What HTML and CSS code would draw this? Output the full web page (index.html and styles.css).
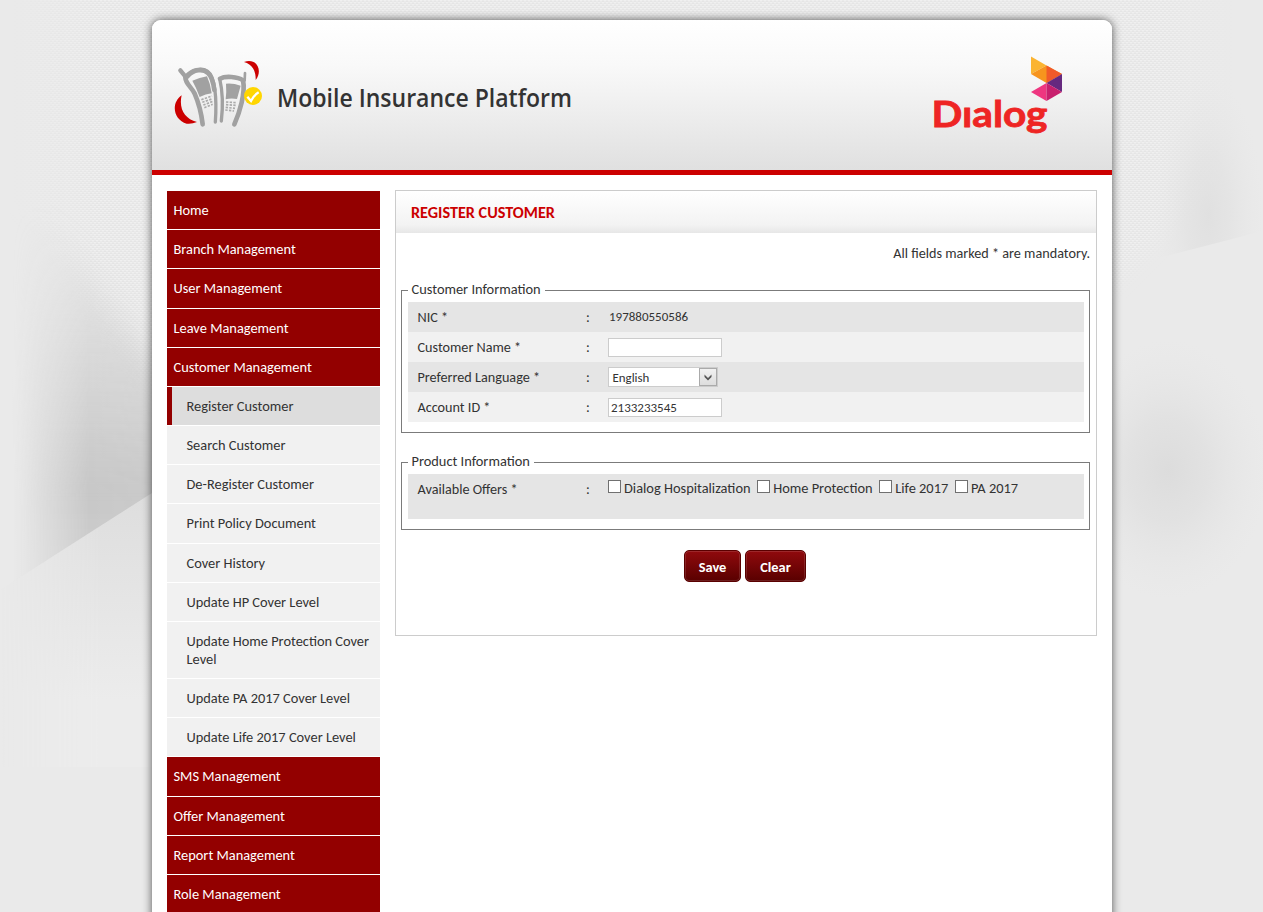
FILE: index.html
```html
<!DOCTYPE html>
<html lang="en">
<head>
<meta charset="utf-8">
<title>Mobile Insurance Platform</title>
<link rel="stylesheet" href="styles.css">
</head>
<body>
<svg class="backdrop" width="1263" height="912" viewBox="0 0 1263 912" aria-hidden="true">
  <defs>
    <pattern id="weave" width="4" height="4" patternUnits="userSpaceOnUse">
      <path d="M0 .5h2M2 2.5h2" stroke="#fff" stroke-opacity=".3"/>
      <path d="M2 1.5h2M0 3.5h2" stroke="#aaa" stroke-opacity=".08"/>
    </pattern>
    <linearGradient id="fadeX" x1="0" x2="1263" y1="0" y2="0" gradientUnits="userSpaceOnUse">
      <stop offset=".01" stop-color="#000"/><stop offset=".08" stop-color="#fff"/>
      <stop offset=".92" stop-color="#fff"/><stop offset=".975" stop-color="#000"/>
    </linearGradient>
    <filter id="edge"><feGaussianBlur stdDeviation="9"/></filter>
    <mask id="weaveMask"><path d="M0 -30H1263V100L1200 200L1112 290H600L175 415L152 400L50 240L0 200Z" fill="url(#fadeX)" filter="url(#edge)"/></mask>
    <linearGradient id="wedgeX" x1="12" x2="152" y1="0" y2="0" gradientUnits="userSpaceOnUse">
      <stop offset="0" stop-color="#000"/><stop offset=".3" stop-color="#888"/><stop offset=".55" stop-color="#fff"/><stop offset="1" stop-color="#eee"/>
    </linearGradient>
    <linearGradient id="wedgeY" x1="0" x2="0" y1="215" y2="560" gradientUnits="userSpaceOnUse">
      <stop offset="0" stop-color="#c8c8c8" stop-opacity="0"/><stop offset=".4" stop-color="#c8c8c8" stop-opacity=".5"/><stop offset=".8" stop-color="#c6c6c6"/><stop offset="1" stop-color="#cecece"/>
    </linearGradient>
    <mask id="wedgeMask"><path d="M0 0H160V488L0 590Z" fill="url(#wedgeX)"/></mask>
    <linearGradient id="lower" x1="0" x2="0" y1="500" y2="700" gradientUnits="userSpaceOnUse">
      <stop offset="0" stop-color="#dedede"/><stop offset="1" stop-color="#ececec"/>
    </linearGradient>
    <linearGradient id="leftFade" x1="0" x2="100" y1="0" y2="0" gradientUnits="userSpaceOnUse">
      <stop offset="0" stop-color="#000"/><stop offset="1" stop-color="#fff"/>
    </linearGradient>
    <mask id="lowerMask"><rect width="160" height="912" fill="url(#leftFade)"/></mask>
    <radialGradient id="spot"><stop offset="0" stop-color="#dcdcdc"/><stop offset=".4" stop-color="#dfdfdf" stop-opacity=".75"/><stop offset="1" stop-color="#e6e6e6" stop-opacity="0"/></radialGradient>
    <filter id="soft" x="-50%" y="-20%" width="200%" height="140%"><feGaussianBlur stdDeviation="13"/></filter>
    <clipPath id="rightEdge"><path d="M1112 0H1263V231L1112 270Z"/></clipPath>
  </defs>
  <rect width="1263" height="912" fill="#eaeaea"/>
  <rect width="1263" height="500" fill="url(#weave)" mask="url(#weaveMask)"/>
  <path d="M0 590L160 488V767H0Z" fill="url(#lower)" mask="url(#lowerMask)"/>
  <g mask="url(#wedgeMask)"><path d="M15 190L70 250L200 420V620H15Z" fill="url(#wedgeY)" filter="url(#soft)"/></g>
  <ellipse cx="1168" cy="470" rx="100" ry="130" fill="url(#spot)"/>
  <g clip-path="url(#rightEdge)"><ellipse cx="1208" cy="215" rx="55" ry="140" fill="url(#spot)" opacity=".7"/></g>
</svg>
<div class="page">
  <header class="header">
    <svg class="phones" viewBox="0 0 360 285" aria-hidden="true">
      <g fill="none" stroke="#a1a1a1" stroke-linecap="round" stroke-linejoin="round">
        <path d="M61 76L74 92" stroke-width="13"/>
        <path d="M76 97C77 117 93 124 104 146C117 176 124 204 128 238" stroke-width="14"/>
        <path d="M78 94C93 74 124 66 143 79C165 94 171 161 166 231" stroke-width="10"/>
        <path d="M82 94C101 73 129 70 144 84C153 92 160 112 163 135" stroke-width="14"/>
        <path d="M179 101C187 135 190 177 184 228" stroke-width="10"/>
        <path d="M180 101C196 92 233 95 249 106C257 143 239 202 223 238" stroke-width="14"/>
        <path d="M255 84L254 106" stroke-width="8"/>
      </g>
      <path fill="#a1a1a1" d="M97 107Q119 98 141 94Q151 116 155 145Q137 147 119 156Q109 128 97 107ZM198 116Q220 114 242 122L231 162Q213 158 197 163Q200 139 198 116Z"/>
      <g stroke="#aaa" stroke-width="5" stroke-dasharray="7 4" fill="none">
        <path d="M124 164L156 153M127 172L158 161M130 180L159 169M133 188L158 178"/>
        <path d="M198 171L230 173M198 179L228 181M197 187L225 190M196 195L222 198"/>
      </g>
      <path fill="#c00" d="M65 151C31 175 41 225 80 236Q95 238 111 231C73 221 56 190 65 151ZM252 51C289 37 310 75 287 105C288 79 278 59 252 51Z"/>
      <circle cx="279" cy="153" r="27" fill="#ffd600"/>
      <path d="M262 155L273 168Q282 150 296 142" fill="none" stroke="#fff" stroke-width="7"/>
    </svg>
    <svg class="title" viewBox="0 0 310 40" role="img" aria-label="Mobile Insurance Platform"><text x="0" y="27" textLength="295" lengthAdjust="spacingAndGlyphs">Mobile Insurance Platform</text></svg>
    <svg class="dialog" viewBox="0 0 160 100" role="img" aria-label="Dialog">
      <path fill="#fbb432" d="M111 11.5L126.500 20.500L111 29Z"/>
      <path fill="#f7941e" d="M111 29L126.500 20.500L142 29L126.500 38Z"/>
      <path fill="#f15a29" d="M126.500 20.500L142 29L126.500 38Z"/>
      <path fill="#66297f" d="M142 29V47L126.500 38Z"/>
      <path fill="#ee3680" d="M126.500 38V56L111 47Z"/>
      <path fill="#c8206e" d="M126.500 38L142 47L126.500 56Z"/>
      <text x="11.500" y="81.500" textLength="116" lengthAdjust="spacingAndGlyphs">Dıalog</text>
    </svg>
  </header>
  <div class="content">
    <nav class="menu">
      <a class="main">Home</a>
      <a class="main">Branch Management</a>
      <a class="main">User Management</a>
      <a class="main">Leave Management</a>
      <a class="main">Customer Management</a>
      <a class="sub active">Register Customer</a>
      <a class="sub">Search Customer</a>
      <a class="sub">De-Register Customer</a>
      <a class="sub">Print Policy Document</a>
      <a class="sub">Cover History</a>
      <a class="sub">Update HP Cover Level</a>
      <a class="sub">Update Home Protection Cover Level</a>
      <a class="sub">Update PA 2017 Cover Level</a>
      <a class="sub">Update Life 2017 Cover Level</a>
      <a class="main">SMS Management</a>
      <a class="main">Offer Management</a>
      <a class="main">Report Management</a>
      <a class="main last">Role Management</a>
    </nav>
    <main class="panel">
      <h1>REGISTER CUSTOMER</h1>
      <p class="note">All fields marked * are mandatory.</p>
      <fieldset>
        <legend>Customer Information</legend>
        <div class="row"><span>NIC *</span><span>:</span><span class="value">197880550586</span></div>
        <div class="row"><span>Customer Name *</span><span>:</span><input class="field" type="text"></div>
        <div class="row"><span>Preferred Language *</span><span>:</span>
          <div class="select"><b>English</b><i><svg viewBox="0 0 16 16"><path d="M4.500 5.500L8 9L11.500 5.500V8L8 11.500L4.500 8Z" fill="#555"/></svg></i></div></div>
        <div class="row"><span>Account ID *</span><span>:</span><input class="field" type="text" value="2133233545"></div>
      </fieldset>
      <fieldset class="product">
        <legend>Product Information</legend>
        <div class="row offers"><span>Available Offers *</span><span>:</span>
          <div class="checks">
            <label><input type="checkbox">Dialog Hospitalization</label>
            <label><input type="checkbox">Home Protection</label>
            <label><input type="checkbox">Life 2017</label>
            <label><input type="checkbox">PA 2017</label>
          </div></div>
      </fieldset>
      <div class="actions"><button class="save">Save</button><button class="clear">Clear</button></div>
    </main>
  </div>
</div>
</body>
</html>
```
FILE: styles.css
```css
* { box-sizing: border-box; }
html { height: 100%; overflow: hidden; background: #eaeaea; }
body { display: flow-root; margin: 0; height: 912px; overflow: hidden; font: 14.2px/18px Carlito, Lato, sans-serif; color: #333; }
.backdrop { position: absolute; top: 0; left: 0; z-index: -1; }
.page { width: 960px; height: 912px; margin: 20px 0 0 152px; background: #fff; border-radius: 9px 9px 0 0; box-shadow: 0 0 10px rgba(0,0,0,.65); }
.header { display: flex; height: 155px; padding: 25px 32px 0 8px; border-bottom: 5px solid #c00; border-radius: 9px 9px 0 0; background: linear-gradient(#fff 0%, #f9f9f9 30%, #e0e0e0 100%); }
.phones { width: 120px; height: 95px; }
.title { width: 310px; height: 40px; margin: 35px auto 0 -3px; overflow: visible; }
.title text { font: 600 24.500px "Open Sans", "Noto Sans", sans-serif; fill: #333; }
.dialog { width: 160px; height: 100px; }
.dialog text { font: 700 37px Lato, sans-serif; fill: #ee2524; stroke: #ee2524; stroke-width: .8px; }
.content { display: flex; align-items: flex-start; gap: 15px; height: 737px; padding: 15px 15px 0; }
.menu { width: 213px; margin-top: 1px; font-size: 14.4px; }
.menu a { display: block; padding: 10px 7px 10px 6.500px; border-bottom: 1px solid #fff; line-height: 18.18px; }
.menu .main { background: #930000; color: #fff; }
.menu .sub { padding-right: 5px; padding-left: 19.500px; background: #f1f1f1; color: #333; line-height: 18.145px; }
.menu .active { background: linear-gradient(90deg, #930000 5px, #ddd 5px); }
.menu .last { height: 37px; padding-bottom: 8px; border-bottom: 0; }
.panel { width: 702px; height: 446px; border: 1px solid #ccc; }
h1 { height: 42px; margin: 0; padding-left: 15px; font-size: 16.2px; line-height: 43px; color: #c00; background: linear-gradient(#fff, #f3f3f3 80%, #e7e7e7); }
.note { margin: 11px 6px 19px; text-align: right; }
fieldset { width: 689px; height: 152px; margin: 0 5px; padding: 2px 5px 0 6px; border: 1px solid #7b7b7b; }
legend { height: 19px; padding: 0 4px 0 3.500px; font-size: 14.4px; line-height: 16px; }
.row { display: grid; grid-template-columns: 168.500px 21.500px 1fr; align-items: center; height: 30px; padding-left: 9.500px; background: #f1f1f1; }
.row:nth-of-type(odd) { background: #e5e5e5; }
.row > .value { padding-left: 1.500px; font-size: 13px; }
.row > input, .row > div { margin-left: .5px; }
.field { width: 114px; height: 19px; padding: 1px 2px; border: 1px solid #ccc; outline: 0; background: #fff; font: 13px Carlito, Lato, sans-serif; color: #333; }
.select { display: flex; justify-content: space-between; width: 110px; height: 20px; padding-left: 3.500px; border: 1px solid #ccc; background: #fff; font-size: 12.900px; line-height: 20px; }
.select b { font-weight: normal; }
.select i { width: 18px; height: 18px; border: 1px solid #aaa; background: linear-gradient(#f1f1f1, #ddd); }
.select svg { display: block; width: 16px; height: 16px; }
.product { height: 77px; margin-top: 20px; }
.offers { height: 45px; align-items: start; padding-top: 6px; }
.checks { display: flex; gap: 6.700px; font-size: 14.4px; white-space: nowrap; }
.checks label { display: flex; gap: 3px; line-height: 17px; }
.checks input { appearance: none; width: 13px; height: 13px; margin: 0; border: 1px solid #707070; background: #fff; }
.actions { display: flex; justify-content: center; gap: 4px; padding-top: 20px; padding-right: 2px; }
button { height: 32px; padding: 1px 0 0; border: 1px solid #5b0000; border-radius: 5px; background: linear-gradient(#900a0d, #590000); box-shadow: inset 0 0 0 1px rgba(255,255,255,.12); color: #fff; font: bold 14.4px Carlito, Lato, sans-serif; }
.save { width: 57px; }
.clear { width: 61px; }
```
